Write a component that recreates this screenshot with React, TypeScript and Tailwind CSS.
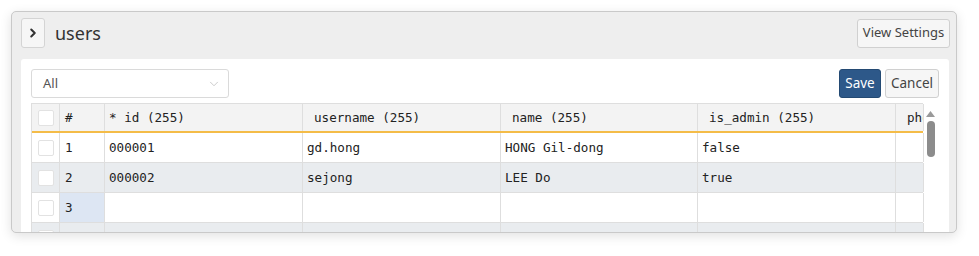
import React from "react";
import { ChevronRight, ChevronDown } from "lucide-react";

const cols = [
  { w: "w-[45px]", label: "#", pad: "pl-[5px]" },
  { w: "w-[198px]", label: "* id (255)", pad: "pl-[4px]" },
  { w: "w-[198px]", label: "username (255)", pad: "pl-[11px]" },
  { w: "w-[197px]", label: "name (255)", pad: "pl-[11px]" },
  { w: "w-[198px]", label: "is_admin (255)", pad: "pl-[11px]" },
  { w: "w-[28px]", label: "phone", pad: "pl-[11px]" },
];

const rows = [
  ["1", "000001", "gd.hong", "HONG Gil-dong", "false", ""],
  ["2", "000002", "sejong", "LEE Do", "true", ""],
  ["3", "", "", "", "", ""],
  ["", "", "", "", "", ""],
];

function Check() {
  return <div className="w-[16px] h-[16px] bg-white border border-[#e2e2e2] rounded-[2px]" />;
}

export default function App() {
  const sans = { fontFamily: '"Noto Sans", "Open Sans", Arial, sans-serif' };
  return (
    <div className="w-[979px] h-[256px] bg-white pt-[11px] pl-[11px]" style={sans}>
      <div className="w-[946px] h-[222px] border border-[#c9c9c9] rounded-[5px] bg-[#eeeeee] shadow-[0_3px_12px_rgba(0,0,0,0.12)] overflow-hidden flex flex-col">
        <div className="flex items-center justify-between pl-[9px] pr-[6px] pt-[6px]">
          <div className="flex items-center">
            <button className="w-[24px] h-[30px] flex items-center justify-center bg-[#f6f6f6] border border-[#d4d4d4] rounded-[3px]">
              <ChevronRight size={14} strokeWidth={3.5} color="#333" />
            </button>
            <span className="ml-[10px] text-[18px] text-[#333] leading-none">users</span>
          </div>
          <button className="w-[93px] h-[29px] bg-[#f6f6f6] border border-[#d0d0d0] rounded-[3px] text-[13px] text-[#444]">
            View Settings
          </button>
        </div>
        <div className="mt-[11px] ml-[9px] mr-[7px] flex-1 bg-white rounded-t-[3px] pt-[10px] pl-[10px] pr-[10px]">
          <div className="flex items-center justify-between h-[29px]">
            <div className="w-[198px] h-[29px] border border-[#dadada] rounded-[3px] flex items-center justify-between pl-[11px] pr-[7px]">
              <span className="text-[13px] text-[#555]">All</span>
              <ChevronDown size={14} strokeWidth={1.2} color="#b5b5b5" />
            </div>
            <div className="flex gap-[4px]">
              <button className="w-[42px] h-[29px] bg-[#2d5889] border border-[#244a73] rounded-[3px] text-white text-[13.5px]">
                Save
              </button>
              <button className="w-[54px] h-[29px] bg-[#f6f6f6] border border-[#d0d0d0] rounded-[3px] text-[#444] text-[13.5px]">
                Cancel
              </button>
            </div>
          </div>
          <div
            className="mt-[5px] flex text-[12.6px] text-[#222]"
            style={{ fontFamily: '"DejaVu Sans Mono", "Liberation Mono", monospace' }}
          >
            <div className="w-[892px] border-l border-[#dedede]">
              <div className="flex h-[30px] bg-[#f3f3f3] border-t border-[#dedede] border-b-[2px] border-b-[#f4bc48]">
                <div className="w-[28px] shrink-0 border-r border-[#dedede] flex items-center justify-center">
                  <Check />
                </div>
                {cols.map((c, i) => (
                  <div
                    key={i}
                    className={`${c.w} shrink-0 border-r border-[#dedede] flex items-center overflow-hidden whitespace-nowrap pt-[1px] ${c.pad}`}
                  >
                    {c.label}
                  </div>
                ))}
              </div>
              {rows.map((r, ri) => (
                <div
                  key={ri}
                  className={`flex h-[30px] border-b border-[#dedede] ${ri % 2 === 1 ? "bg-[#e9ecef]" : "bg-white"}`}
                >
                  <div className="w-[28px] shrink-0 border-r border-[#dedede] flex items-center justify-center">
                    <Check />
                  </div>
                  {cols.map((c, ci) => (
                    <div
                      key={ci}
                      className={`${c.w} shrink-0 border-r border-[#dedede] flex items-center overflow-hidden whitespace-nowrap pt-[2px] ${ci === 0 ? "pl-[5px]" : "pl-[4px]"} ${ri === 2 && ci === 0 ? "bg-[#dde6f3]" : ""}`}
                    >
                      {r[ci]}
                    </div>
                  ))}
                </div>
              ))}
            </div>
            <div className="w-[15px] flex flex-col items-center pt-[8px]">
              <svg width="9" height="6" viewBox="0 0 9 6">
                <path d="M0 6 L4.5 0 L9 6 Z" fill="#9a9a9a" />
              </svg>
              <div className="mt-[4px] w-[8px] h-[36px] rounded-[4px] bg-[#8c8c8c]" />
            </div>
          </div>
        </div>
      </div>
    </div>
  );
}
